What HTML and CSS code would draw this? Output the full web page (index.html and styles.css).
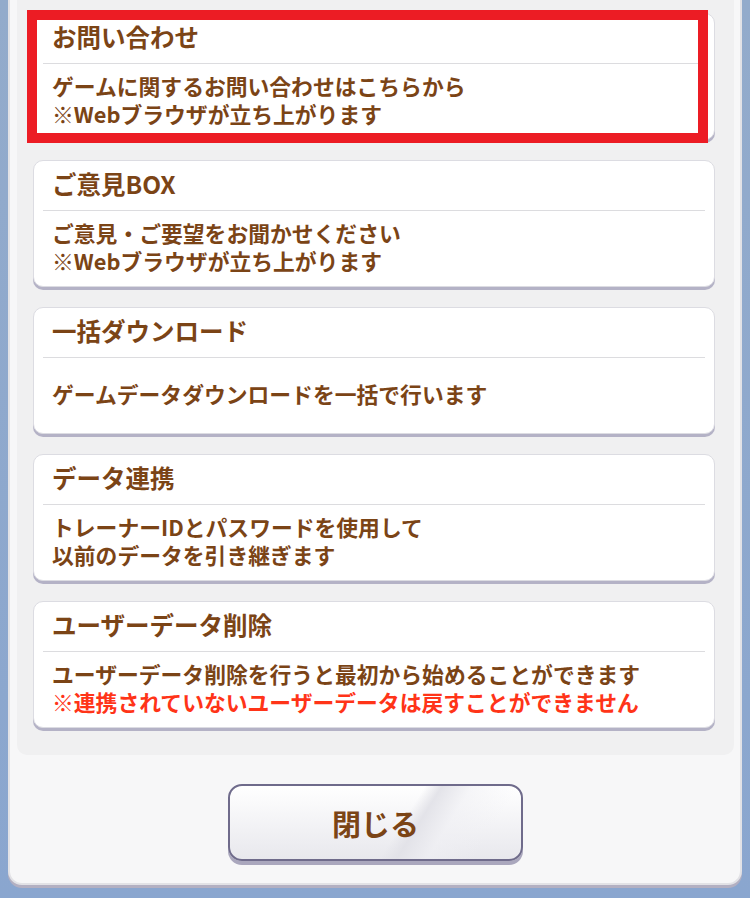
FILE: index.html
```html
<!DOCTYPE html>
<html lang="ja">
<head>
    <meta charset="UTF-8">
    <meta name="viewport" content="width=device-width, initial-scale=1.0">
    <title>その他</title>
    <link rel="stylesheet" href="styles.css">
</head>
<body>
    <div class="modal">
        <div class="menu-panel">
            <div class="menu-card is-selected">
                <div class="card-title">お問い合わせ</div>
                <div class="card-body">
                    <p>ゲームに関するお問い合わせはこちらから</p>
                    <p>※Webブラウザが立ち上がります</p>
                </div>
                <div class="highlight"></div>
            </div>
            <div class="menu-card">
                <div class="card-title">ご意見BOX</div>
                <div class="card-body">
                    <p>ご意見・ご要望をお聞かせください</p>
                    <p>※Webブラウザが立ち上がります</p>
                </div>
            </div>
            <div class="menu-card">
                <div class="card-title">一括ダウンロード</div>
                <div class="card-body">
                    <p>ゲームデータダウンロードを一括で行います</p>
                </div>
            </div>
            <div class="menu-card">
                <div class="card-title">データ連携</div>
                <div class="card-body">
                    <p>トレーナーIDとパスワードを使用して</p>
                    <p>以前のデータを引き継ぎます</p>
                </div>
            </div>
            <div class="menu-card">
                <div class="card-title">ユーザーデータ削除</div>
                <div class="card-body">
                    <p>ユーザーデータ削除を行うと最初から始めることができます</p>
                    <p class="warning">※連携されていないユーザーデータは戻すことができません</p>
                </div>
            </div>
        </div>
        <div class="footer">
            <button class="close-button">閉じる</button>
        </div>
    </div>
</body>
</html>
```

FILE: styles.css
```css
body {
    margin: 0;
    height: 898px;
    overflow: hidden;
    background: linear-gradient(180deg, #93abcb, #8aa6cf);
    font-family: 'Noto Sans CJK JP', 'Noto Sans', sans-serif;
    font-weight: 700;
    color: #7b4416;
}
.modal {
    margin: 0 8px;
    height: 883px;
    background: #f7f7f8;
    border: 2px solid #e2e2e6;
    border-top: none;
    border-radius: 0 0 14px 14px;
    box-shadow: 0 3px 0 #b3b0c2;
    box-sizing: content-box;
}
.menu-panel {
    margin: 0 6px 0 7px;
    padding: 13px 19px 7px 16px;
    background: #f0f0f1;
    border-radius: 0 0 10px 10px;
}
.menu-card {
    position: relative;
    height: 127px;
    margin-bottom: 20px;
    background: #ffffff;
    border: 1px solid #dcdce2;
    border-radius: 10px;
    box-shadow: 0 3px 0 #b4b2c6;
    box-sizing: border-box;
    display: flex;
    flex-direction: column;
}
.card-title {
    height: 50px;
    margin: 0 9px;
    padding: 0 0 4px 9px;
    box-sizing: border-box;
    display: flex;
    align-items: center;
    font-size: 24.5px;
    border-bottom: 1px solid #dcdcdf;
}
.card-body {
    flex: 1;
    padding: 0 18px 3px;
    display: flex;
    flex-direction: column;
    justify-content: center;
    font-size: 21.8px;
    line-height: 28px;
}
.card-body p {
    margin: 0;
    white-space: nowrap;
}
.warning {
    color: #ff3418;
}
.highlight {
    position: absolute;
    left: -7px;
    top: -4px;
    right: 6px;
    bottom: -4px;
    border: 10px solid #ec1c24;
}
.footer {
    display: flex;
    justify-content: center;
    padding-top: 29px;
}
.close-button {
    width: 295px;
    height: 77px;
    border: 2px solid #6f6b8b;
    border-radius: 14px;
    background:
        linear-gradient(122deg, rgba(255, 255, 255, 0) 58%, rgba(226, 226, 232, 0.95) 63%, rgba(240, 240, 244, 0.6) 72%, rgba(255, 255, 255, 0) 86%),
        linear-gradient(180deg, #ffffff, #e8e8ed);
    box-shadow: 0 4px 0 #aaa7bd;
    font-family: inherit;
    font-weight: 700;
    font-size: 29px;
    color: #7b4416;
    padding: 0;
    margin-left: 1px;
}
```
